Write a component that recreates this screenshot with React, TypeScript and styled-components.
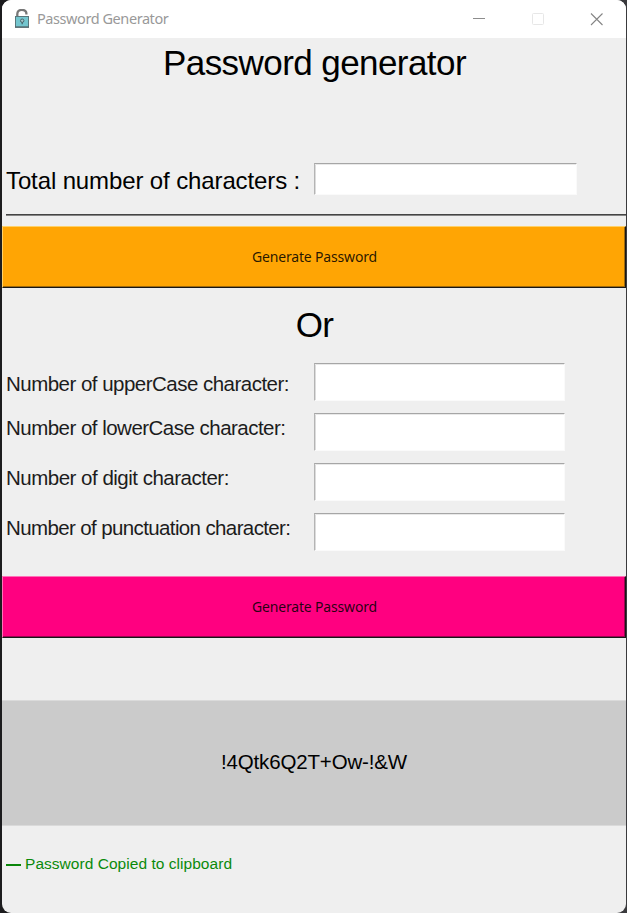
import React from "react";
import styled, { createGlobalStyle } from "styled-components";

const GlobalStyle = createGlobalStyle`
  * { box-sizing: border-box; }
  html, body { margin: 0; padding: 0; background: #1f1f20; overflow: hidden; }
`;

const Desktop = styled.div`
  width: 627px;
  height: 913px;
  padding: 0 1px 0 2px;
  background: linear-gradient(90deg, #1c1c1e 0 50%, #3a3a3d 50%);
  font-family: "Liberation Sans", Arial, sans-serif;
`;

const Window = styled.main`
  display: flex;
  flex-direction: column;
  width: 624px;
  height: 913px;
  background: #efefef;
  border-radius: 9px;
  overflow: hidden;
`;

const TitleBar = styled.header`
  display: flex;
  align-items: center;
  flex: none;
  height: 38px;
  padding: 0 23px 0 12px;
  background: #fff;
`;

const Caption = styled.span`
  flex: 1;
  margin: 0 0 2px 6px;
  font: 400 14.5px/20px "Noto Sans", "Open Sans", sans-serif;
  letter-spacing: -0.43px;
  color: #999;
`;

const WindowControls = styled.div`
  display: flex;
  align-items: center;
  gap: 46px;
`;

const Heading = styled.h1<{ $height: number; $pad: number }>`
  flex: none;
  height: ${(p) => p.$height}px;
  margin: 0;
  padding: ${(p) => p.$pad}px 0 0 1px;
  font-size: 35px;
  line-height: 40px;
  letter-spacing: -0.57px;
  font-weight: 400;
  text-align: center;
  color: #000;
`;

const FieldRow = styled.label<{ $height: number }>`
  display: grid;
  grid-template-columns: 308px 1fr;
  flex: none;
  height: ${(p) => p.$height}px;
  padding-left: 4px;
`;

const FieldLabel = styled.span<{ $size: number; $top: number; $spacing: number }>`
  padding-top: ${(p) => p.$top}px;
  font-size: ${(p) => p.$size}px;
  line-height: 24px;
  letter-spacing: ${(p) => p.$spacing}px;
  white-space: nowrap;
  color: ${(p) => (p.$size > 22 ? "#000" : "#1c1c1c")};
`;

const Entry = styled.input<{ $width: number; $height: number }>`
  width: ${(p) => p.$width}px;
  height: ${(p) => p.$height}px;
  padding: 0 4px;
  border: 1px solid;
  border-color: #a6a6a6 #fafafa #fafafa #b4b4b4;
  border-radius: 0;
  outline: 0;
  background: #fff;
  box-shadow: inset 0 1px 0 #e9e9e9, inset 1px 0 0 #dcdcdc;
  font-size: 20px;
`;

const Divider = styled.hr`
  flex: none;
  width: 620px;
  height: 2px;
  margin: 0 0 10px 4px;
  border: 0;
  border-top: 1px solid #444;
  border-bottom: 1px solid #858585;
`;

const GenerateButton = styled.button<{ $face: string; $light: string; $dark: string }>`
  flex: none;
  height: 62px;
  padding: 0 0 1px 1px;
  border: 1px solid;
  border-color: ${(p) => p.$light} #171717 #171717 ${(p) => p.$light};
  border-radius: 0;
  background: ${(p) => p.$face};
  box-shadow: inset -1px -1px 0 ${(p) => p.$dark};
  font: 400 14px/20px "Noto Sans", "Open Sans", sans-serif;
  color: rgba(0, 0, 0, 0.86);
`;

const ButtonText = styled.span`
  display: inline-block;
  letter-spacing: -0.17px;
`;

const CountsEnd = styled.div`
  flex: none;
  height: 13px;
`;

const Result = styled.output`
  display: flex;
  align-items: center;
  justify-content: center;
  flex: none;
  height: 126px;
  margin-top: 62px;
  padding-bottom: 2px;
  border-top: 1px solid #dadada;
  border-bottom: 1px solid #dadada;
  background: #cbcbcb;
  font-size: 20.5px;
  line-height: 24px;
  letter-spacing: -0.15px;
  color: #000;
`;

const Status = styled.p`
  display: flex;
  align-items: center;
  gap: 4px;
  margin: 29px 0 0 4px;
  font-size: 15.5px;
  line-height: 18px;
  letter-spacing: 0.04px;
  color: #0a8a0a;
`;

const Dash = styled.span`
  width: 15px;
  height: 2px;
  margin-top: 2px;
  background: #0a860a;
`;

const counts = [
  { label: "Number of upperCase character:", top: 9, spacing: -0.52 },
  { label: "Number of lowerCase character:", top: 3, spacing: -0.52 },
  { label: "Number of digit character:", top: 3, spacing: -0.5 },
  { label: "Number of punctuation character:", top: 3, spacing: -0.62 },
];

function LockIcon() {
  return (
    <svg width="17" height="20" viewBox="0 0 17 20">
      <path d="M3.3 7.2V5C3.3 2.4 5.1.9 7.8.9S12.4 2.4 12.4 4.8V5.6" fill="none" stroke="#777" strokeWidth="2.3" />
      <rect x="3.5" y="7.5" width="13" height="10.6" transform="translate(-2)" fill="#74c6cf" stroke="#58777c" />
      <path d="M1 18.2h14" stroke="#52656a" strokeWidth="1.2" />
      <circle cx="8.2" cy="11.7" r="1.7" fill="#a7c8cc" stroke="#46666c" />
      <path d="M8.2 13.3v2" stroke="#46666c" strokeWidth="1.3" />
    </svg>
  );
}

function Controls() {
  return (
    <WindowControls>
      <svg width="13" height="13" viewBox="0 0 13 13">
        <path d="M1 5.5h12" stroke="#8d8d8d" />
      </svg>
      <svg width="13" height="13" viewBox="0 0 13 13">
        <rect x="1.5" y=".5" width="11" height="11" rx="1" fill="none" stroke="#e7e7e7" />
      </svg>
      <svg width="13" height="13" viewBox="0 0 13 13">
        <path d="M1 .5l11.5 11.5m0-11.5l-11.5 11.5" stroke="#858585" strokeWidth="1.1" />
      </svg>
    </WindowControls>
  );
}

export default function App() {
  return (
    <Desktop>
      <GlobalStyle />
      <Window>
        <TitleBar>
          <LockIcon />
          <Caption>Password Generator</Caption>
          <Controls />
        </TitleBar>
        <Heading $height={125} $pad={5}>Password generator</Heading>
        <FieldRow $height={51}>
          <FieldLabel $size={24} $top={6} $spacing={-0.12}>Total number of characters :</FieldLabel>
          <Entry $width={263} $height={32} />
        </FieldRow>
        <Divider />
        <GenerateButton $face="#ffa504" $light="#ffd168" $dark="#a06a0c">
          <ButtonText>Generate Password</ButtonText>
        </GenerateButton>
        <Heading as="h2" $height={75} $pad={17}>Or</Heading>
        {counts.map((c) => (
          <FieldRow key={c.label} $height={50}>
            <FieldLabel $size={20.5} $top={c.top} $spacing={c.spacing}>{c.label}</FieldLabel>
            <Entry $width={251} $height={38} />
          </FieldRow>
        ))}
        <CountsEnd />
        <GenerateButton $face="#ff0080" $light="#ff70b7" $dark="#990650">
          <ButtonText>Generate Password</ButtonText>
        </GenerateButton>
        <Result>!4Qtk6Q2T+Ow-!&amp;W</Result>
        <Status><Dash />Password Copied to clipboard</Status>
      </Window>
    </Desktop>
  );
}
